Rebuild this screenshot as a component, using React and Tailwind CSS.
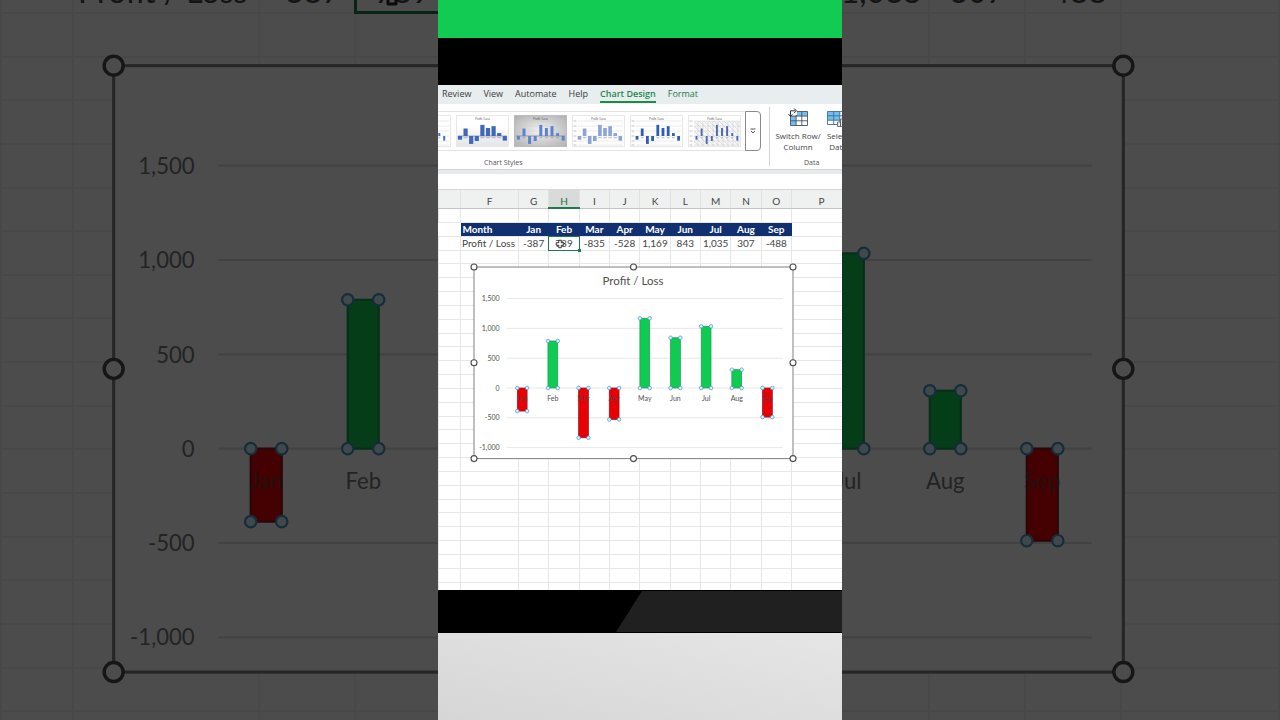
// Excel chart tutorial short - portrait frame over an enlarged, dimmed view of the same sheet
import React, { useState } from 'react';

const PROFITS = [
  { month: 'Jan', value: -387 },
  { month: 'Feb', value: 789 },
  { month: 'Mar', value: -835 },
  { month: 'Apr', value: -528 },
  { month: 'May', value: 1169 },
  { month: 'Jun', value: 843 },
  { month: 'Jul', value: 1035 },
  { month: 'Aug', value: 307 },
  { month: 'Sep', value: -488 },
];

const COLUMNS = ['', 'F', 'G', 'H', 'I', 'J', 'K', 'L', 'M', 'N', 'O', 'P'];
const TABS = ['Review', 'View', 'Automate', 'Help', 'Chart Design', 'Format'];
const TICKS = [1500, 1000, 500, 0, -500, -1000];

const formatNumber = (value) => value.toLocaleString('en-US');

const ProfitChart = ({ className }) => {
  const zero = 121;
  const unit = 0.0596;
  const band = 30.65;

  return (
    <svg viewBox="-4 -4 327 200" className={className} role="img" aria-label="Profit / Loss chart">
      <rect x="0" y="0" width="319" height="191.6" fill="#fff" stroke="#808080" strokeWidth="1" />
      <text x="159" y="18" fontSize="11.5" textAnchor="middle" fill="currentColor">Profit / Loss</text>

      {TICKS.map((tick) => (
        <g key={tick}>
          <line x1="33" x2="309" y1={zero - tick * unit} y2={zero - tick * unit} stroke="#dedede" strokeWidth="0.7" />
          <text x="25.6" y={zero - tick * unit + 2.6} fontSize="7" textAnchor="end" fill="currentColor">
            {formatNumber(tick)}
          </text>
        </g>
      ))}

      {PROFITS.map(({ month, value }, i) => {
        const center = 48.2 + i * band;
        const height = Math.abs(value) * unit;
        const top = value > 0 ? zero - height : zero;
        const corners = [
          [center - 4.9, top],
          [center + 4.9, top],
          [center - 4.9, top + height],
          [center + 4.9, top + height],
        ];
        return (
          <g key={month}>
            <rect
              x={center - 4.9}
              y={top}
              width="9.8"
              height={height}
              fill={value > 0 ? '#10cb52' : '#e80005'}
              stroke={value > 0 ? '#1a9c50' : '#8c1620'}
              strokeWidth="0.7"
            />
            <text
              x={center}
              y="133.8"
              fontSize="7"
              textAnchor="middle"
              fill={value > 0 ? 'currentColor' : '#4a4a4a'}
              opacity={value > 0 ? 1 : 0.7}
            >
              {month}
            </text>
            {corners.map(([x, y]) => (
              <circle key={`${x}-${y}`} cx={x} cy={y} r="1.8" fill="#d9f1fa" stroke="#4596c4" strokeWidth="0.7" />
            ))}
          </g>
        );
      })}

      {/* Resize handles */}
      {[0, 95.8, 191.6].map((y) =>
        [0, 159.5, 319].map((x) =>
          x === 159.5 && y === 95.8 ? null : (
            <circle key={`${x}-${y}`} cx={x} cy={y} r="3" fill="#fff" stroke="#4a4a4a" strokeWidth="1.1" />
          )
        )
      )}
    </svg>
  );
};

const CellCursor = ({ className }) => (
  <svg viewBox="0 0 12 12" className={className} aria-hidden="true">
    <path
      d="M4.5 1.5h3v3h3v3h-3v3h-3v-3h-3v-3h3z"
      fill="#fff"
      stroke="#222"
      strokeWidth="1.1"
      strokeLinejoin="round"
    />
  </svg>
);

const STYLES = [
  { bar: 2, start: 7, step: 4.9, fill: '#4472c4', lines: true },
  { bar: 4.2, start: 4, step: 5.6, fill: '#3f69b8', shade: 'soft' },
  { bar: 3, start: 4.4, step: 5.6, fill: '#5b84cc', shade: 'gray', lines: true },
  { bar: 3.6, start: 7.5, step: 5.1, fill: '#8ba3d8', lines: true, axis: true },
  { bar: 2.8, start: 7, step: 5.2, fill: '#2f5cb4', lines: true, axis: true },
  { bar: 1.9, start: 8.5, step: 5.1, fill: '#4a69b4', lines: true, axis: true, hatch: true },
];

const StyleThumb = ({ bar, start, step, fill, shade, lines, axis, hatch, index }) => {
  const backgrounds = { soft: 'url(#thumb-soft)', gray: 'url(#thumb-gray)' };
  return (
    <button type="button" aria-label={`Chart style ${index + 1}`} className="h-8 w-[53px] shrink-0">
      <svg viewBox="0 0 53 32" className="block h-full w-full">
        <defs>
          <linearGradient id="thumb-soft" x1="0" y1="0" x2="0" y2="1">
            <stop offset="0.35" stopColor="#fff" />
            <stop offset="1" stopColor="#e2e4e8" />
          </linearGradient>
          <radialGradient id="thumb-gray" cx="0.5" cy="0.5" r="0.75">
            <stop offset="0" stopColor="#f4f4f4" />
            <stop offset="1" stopColor="#a9a9a9" />
          </radialGradient>
          <pattern id="thumb-hatch" width="5" height="5" patternUnits="userSpaceOnUse">
            <rect width="5" height="5" fill="#f7f7f7" />
            <path d="M0 0L5 5M5 0V5M0 0V5" stroke="#c9c9cd" strokeWidth="0.5" />
          </pattern>
        </defs>
        <rect x="0.5" y="0.5" width="52" height="31" fill={shade ? backgrounds[shade] : '#fff'} stroke={shade === 'gray' ? '#bcbcbc' : '#e8e8e8'} />
        {hatch && <rect x="6" y="6" width="46" height="25" fill="url(#thumb-hatch)" />}
        {lines && [6, 11, 16, 21, 26, 30].map((y) => (
          <line key={y} x1={axis ? 6 : 2} x2="51" y1={y} y2={y} stroke="#c9ccd2" strokeWidth="0.4" />
        ))}
        {axis && [6, 11, 16, 21, 26, 30].map((y) => (
          <line key={y} x1="1.5" x2="4.5" y1={y} y2={y} stroke="#a8a8a8" strokeWidth="0.7" />
        ))}
        <text x="26.5" y="4.6" fontSize="2.6" textAnchor="middle" fill="#333">Profit / Loss</text>
        {shade && <line x1="2" x2="51" y1="21" y2="21" stroke="#6b7280" strokeWidth="0.6" />}
        {PROFITS.map(({ month, value }, i) => {
          const height = Math.abs(value) * 0.0095;
          const x = start + i * step - bar / 2;
          return (
            <g key={month}>
              <rect x={x} y={value > 0 ? 21 - height : 21} width={bar} height={height} fill={fill} />
              {value > 0 && <rect x={x} y="22.4" width={bar} height="0.8" fill="#9aa3b5" />}
            </g>
          );
        })}
      </svg>
    </button>
  );
};

const SwitchRowIcon = () => (
  <svg viewBox="0 0 22 20" className="h-5 w-[22px]" aria-hidden="true">
    <rect x="3.5" y="4.5" width="17" height="14" fill="#fff" />
    <path d="M9 4.5h11.5v4.6H9zM3.5 9h5.6v9.5H3.5z" fill="#74bdf0" />
    <path d="M9 4.5h11.5v14H3.5V9M3.5 9.1h17M3.5 13.8h17M9.1 4.5v14M14.8 4.5v14" fill="none" stroke="#4a545e" strokeWidth="0.9" />
    <path d="M1 2h9v6H1z" fill="#fff" />
    <path d="M3.5 9V3.8h5M1.5 7.2l2 2.2 2-2.2M7 1.4l2.4 2.4L7 6.2" fill="none" stroke="#333" strokeWidth="1" />
  </svg>
);

const SelectDataIcon = () => (
  <svg viewBox="0 0 22 20" className="h-5 w-[22px]" aria-hidden="true">
    <rect x="0.5" y="4.5" width="18" height="13" fill="#fff" />
    <path d="M0.5 4.5h12.4v8.8H0.5z" fill="#74bdf0" />
    <path d="M0.5 4.5h18v13h-18zM0.5 8.8h18M0.5 13.2h18M6.7 4.5v13M12.8 4.5v13" fill="none" stroke="#3e6f9c" strokeWidth="0.9" />
    <path d="M10.5 15h3v4.5h-3zM13.5 12h3v7.5h-3zM16.5 9.5h3v10h-3z" fill="#ececec" stroke="#555" strokeWidth="0.8" />
  </svg>
);

const Ribbon = () => {
  const [activeTab, setActiveTab] = useState('Chart Design');

  const getTabClass = (tab) => {
    if (tab === activeTab) return 'border-[#1d8a4a] font-semibold text-[#1d8a4a]';
    if (tab === 'Format') return 'border-transparent text-[#1d7d45]';
    return 'border-transparent text-[#3c3c3c]';
  };

  return (
    <div className="font-['Open_Sans',sans-serif]">
      <nav className="flex h-[19px] items-center gap-3 bg-[#e8edef] pl-1 text-[9px] leading-[14px]">
        {TABS.map((tab) => (
          <button
            key={tab}
            type="button"
            onClick={() => setActiveTab(tab)}
            className={`border-b-2 whitespace-nowrap ${getTabClass(tab)}`}
          >
            {tab}
          </button>
        ))}
      </nav>

      <div className="flex h-[66px] border-b border-[#cfd3d6] bg-white">
        {/* Chart style gallery */}
        <div className="min-w-0 flex-1 pt-[7px]">
          <div className="flex h-10">
            <div className="flex min-w-0 flex-1 items-center justify-end gap-[5px] overflow-hidden border-y border-[#e3e3e3] pr-1">
              {STYLES.map((style, i) => (
                <StyleThumb key={i} index={i} {...style} />
              ))}
            </div>
            <button
              type="button"
              aria-label="More chart styles"
              className="mr-2 flex w-4 items-center justify-center rounded-r-sm border border-[#8a8a8a]"
            >
              <svg viewBox="0 0 6 6" className="h-1.5 w-1.5">
                <path d="M0.5 1h5M1 3l2 2 2-2" fill="none" stroke="#444" strokeWidth="0.9" />
              </svg>
            </button>
          </div>
          <div className="pt-[7px] pl-[46px] text-[7px] leading-[10px] text-[#555]">Chart Styles</div>
        </div>

        {/* Data group */}
        <div className="my-[3px] w-[73px] overflow-hidden border-l border-[#d4d4d4]">
          <div className="flex w-[90px] text-[8px] leading-[11px] text-[#444]">
            <button type="button" className="flex w-14 shrink-0 flex-col items-center">
              <SwitchRowIcon />
              <span className="pt-[3px] text-center whitespace-nowrap">Switch Row/<br />Column</span>
            </button>
            <button type="button" className="flex w-6 shrink-0 flex-col items-center">
              <SelectDataIcon />
              <span className="pt-[3px] text-center">Select<br />Data</span>
            </button>
          </div>
          <div className="pt-1.5 pl-[34px] text-[7px] leading-[10px] text-[#555]">Data</div>
        </div>
      </div>
    </div>
  );
};

const EmptyRow = ({ className }) => (
  <tr className={className}>
    {COLUMNS.map((name) => (
      <td key={name} className="border border-[#e6e6e6] p-0" />
    ))}
  </tr>
);

const Sheet = () => (
  <div className="relative min-h-0 flex-1 overflow-hidden bg-white">
    {/* Column P runs past the right edge of the window */}
    <table className="w-[calc(100%+10px)] table-fixed border-collapse text-center text-[10px] leading-3 text-[#444]">
      <colgroup>
        <col className="w-[22px]" />
        <col className="w-[58px]" />
        {PROFITS.map(({ month }) => <col key={month} />)}
        <col className="w-[60px]" />
      </colgroup>
      <thead>
        <tr className="h-[18px] bg-[#eff0f0]">
          {COLUMNS.map((name) => (
            <th
              key={name}
              className={`border-x border-x-[#e2e2e2] p-0 pt-1 font-normal ${
                name === 'H' ? 'border-b-2 border-b-[#1e7a4a] bg-[#d9dbda] text-[#1e6b45]' : 'border-b border-b-[#c4c4c4]'
              }`}
            >
              {name}
            </th>
          ))}
        </tr>
      </thead>
      <tbody>
        <EmptyRow className="h-3.5" />
        <tr className="h-3.5 text-white">
          <td className="p-0" />
          <th className="bg-[#10306f] p-0 pl-0.5 text-left">Month</th>
          {PROFITS.map(({ month }) => (
            <th key={month} className="bg-[#10306f] p-0">{month}</th>
          ))}
          <td className="p-0" />
        </tr>
        <tr className="h-3.5">
          <td className="border border-[#e6e6e6] p-0" />
          <td className="border border-[#e6e6e6] p-0 pl-px text-left whitespace-nowrap">Profit / Loss</td>
          {PROFITS.map(({ month, value }) => (
            <td key={month} className="relative border border-[#e6e6e6] p-0">
              {formatNumber(value)}
              {month === 'Feb' && (
                <>
                  <span className="absolute -inset-px border border-[#1e7a4a]" />
                  <span className="absolute -right-0.5 -bottom-0.5 h-[3px] w-[3px] bg-[#1e7a4a]" />
                  <CellCursor className="absolute top-0.5 left-1.5 h-2.5 w-2.5" />
                </>
              )}
            </td>
          ))}
          <td className="border border-[#e6e6e6] p-0" />
        </tr>
        {Array.from({ length: 25 }, (_, i) => (
          <EmptyRow key={i} className={i % 6 === 0 ? 'h-[13px]' : 'h-3.5'} />
        ))}
      </tbody>
    </table>
    <ProfitChart className="absolute top-[73px] left-8 w-[327px] text-[#505050]" />
  </div>
);

const Backdrop = () => (
  <div className="absolute inset-0 overflow-hidden bg-white" aria-hidden="true">
    <table className="absolute -top-8 left-0 h-[788px] w-full table-fixed border-collapse text-center text-[32px] leading-10 text-[#444]">
      <colgroup>
        <col className="w-[72px]" />
        <col className="w-[186px]" />
        {PROFITS.map(({ month }) => <col key={month} />)}
        <col className="w-[158px]" />
      </colgroup>
      <tbody>
        <tr className="h-11">
          <td className="border-2 border-[#f0f0f0] p-0" />
          <td className="border-2 border-[#f0f0f0] p-0 pl-1 text-left whitespace-nowrap">Profit / Loss</td>
          {PROFITS.map(({ month, value }) => (
            <td key={month} className="relative border-2 border-[#f0f0f0] p-0">
              {formatNumber(value)}
              {month === 'Feb' && <span className="absolute -inset-0.5 border-[3px] border-[#1e7a4a]" />}
              {month === 'Feb' && <CellCursor className="absolute top-1.5 left-5 h-8 w-8" />}
            </td>
          ))}
          <td className="border-2 border-[#f0f0f0] p-0" />
        </tr>
        {Array.from({ length: 17 }, (_, i) => (
          <tr key={i}>
            {COLUMNS.map((name) => (
              <td key={name} className="border-2 border-[#f0f0f0] p-0" />
            ))}
          </tr>
        ))}
      </tbody>
    </table>
    <ProfitChart className="absolute top-[53px] left-[101px] w-[1035px] text-[#777]" />
    <div className="absolute inset-0 bg-black/70" />
  </div>
);

const App = () => (
  <main className="relative flex min-h-screen justify-center overflow-hidden font-[Lato,sans-serif]">
    <Backdrop />
    <section className="relative flex h-screen w-full max-w-[404px] flex-col overflow-hidden">
      <div className="h-[38px] shrink-0 bg-[#11cb53]" />
      <div className="h-[47px] shrink-0 bg-black" />
      <Ribbon />
      <div className="h-5 shrink-0 border-t-4 border-b border-t-[#e6eaec] border-b-[#d8d8d8] bg-white" />
      <Sheet />
      <div className="h-[43px] shrink-0 bg-black">
        <svg viewBox="0 0 404 43" preserveAspectRatio="none" className="block h-full w-full">
          <path d="M204 1H404V42H178z" fill="#202020" />
        </svg>
      </div>
      <div className="h-[87px] shrink-0 bg-linear-to-tr from-[#d6d6d6] to-[#e6e6e6]" />
    </section>
  </main>
);

export default App;
